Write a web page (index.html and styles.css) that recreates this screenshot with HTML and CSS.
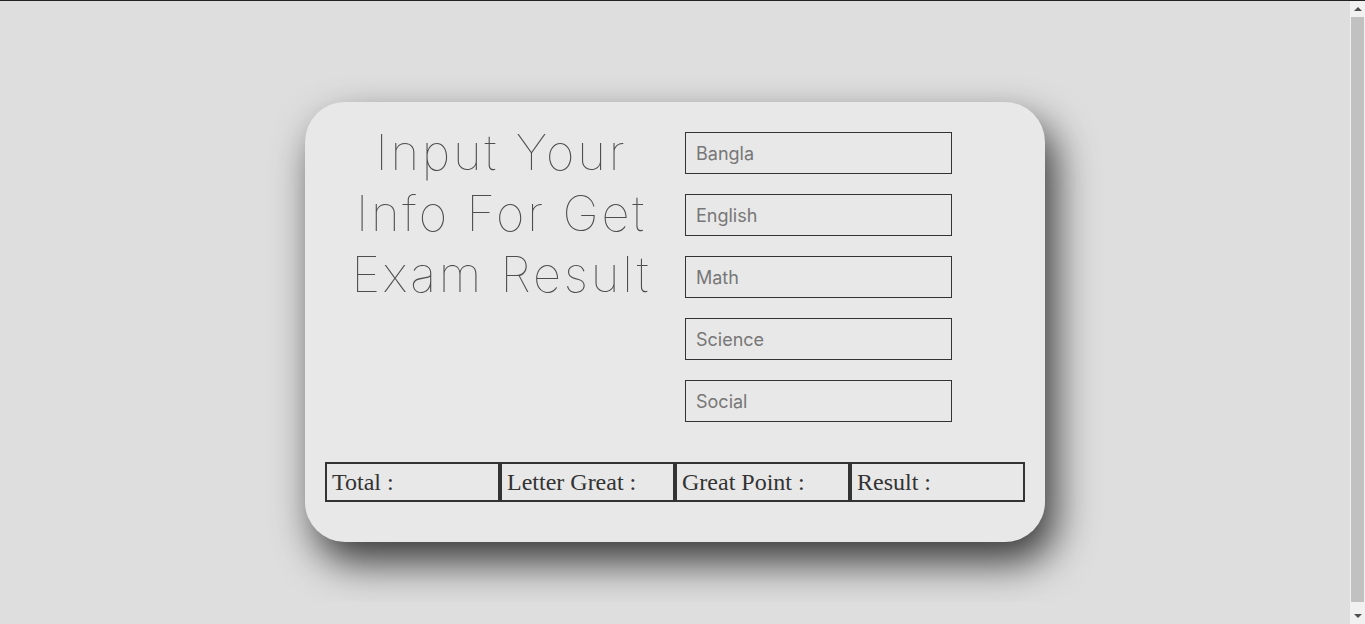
FILE: index.html
```html
<!DOCTYPE html>
<html lang="en">
<head>
<meta charset="utf-8">
<title>Exam Result</title>
<link rel="stylesheet" href="styles.css">
</head>
<body>
<main class="page">
  <section class="card">
    <div class="top">
      <h1 class="title"><span class="line">Input Your</span><span class="line">Info For Get</span><span class="line">Exam Result</span></h1>
      <form class="fields">
        <input class="field" type="text" placeholder="Bangla">
        <input class="field" type="text" placeholder="English">
        <input class="field" type="text" placeholder="Math">
        <input class="field" type="text" placeholder="Science">
        <input class="field" type="text" placeholder="Social">
      </form>
    </div>
    <table class="result">
      <tr>
        <td>Total :</td>
        <td>Letter Great :</td>
        <td>Great Point :</td>
        <td>Result :</td>
      </tr>
    </table>
  </section>
</main>
<div class="scrollbar" aria-hidden="true">
  <span class="arrow up"></span>
  <span class="thumb"></span>
  <span class="arrow down"></span>
</div>
</body>
</html>
```
FILE: styles.css
```css
html {
  border-top: 1px solid #222;
  background: #dedede;
}
body {
  margin: 0;
  background: #dedede;
  overflow: hidden;
}
.page {
  padding: 101px 15px 60px 0;
}
.card {
  box-sizing: border-box;
  width: 740px;
  height: 440px;
  margin: 0 auto;
  padding: 30px 20px 40px;
  background: #e8e8e8;
  border-radius: 40px;
  box-shadow: 10px 20px 40px rgba(0, 0, 0, 0.75);
  display: flex;
  flex-direction: column;
}
.top {
  display: flex;
  align-items: flex-start;
}
.title {
  width: 350px;
  margin: -10px 0 0;
  font-family: "Inter", "Lato", sans-serif;
  font-weight: 100;
  font-size: 49px;
  line-height: 61px;
  letter-spacing: 2.8px;
  color: #4e4e4e;
  text-align: center;
}
.line {
  display: block;
  white-space: nowrap;
  margin-right: -2.8px;
}
.fields {
  margin-left: 10px;
  display: flex;
  flex-direction: column;
  gap: 20px;
}
.field {
  box-sizing: border-box;
  width: 267px;
  height: 42px;
  margin: 0;
  padding: 0 10px;
  border: 1px solid #333;
  background: transparent;
  font-family: "Inter", sans-serif;
  font-size: 18px;
  color: #333;
  outline: none;
}
.field::placeholder {
  color: #777;
}
.result {
  margin-top: 40px;
  width: 700px;
  border-spacing: 0;
  table-layout: fixed;
}
.result td {
  height: 36px;
  padding: 0 5px;
  border: 2px solid #333;
  font-family: "Liberation Serif", serif;
  font-size: 24px;
  color: #333;
}
.scrollbar {
  position: fixed;
  top: 1px;
  right: 0;
  bottom: 0;
  width: 15px;
  background: #f1f1f1;
  display: flex;
  flex-direction: column;
  align-items: center;
}
.arrow {
  width: 0;
  height: 0;
  border-left: 4px solid transparent;
  border-right: 4px solid transparent;
}
.up {
  margin-top: 6px;
  border-bottom: 4px solid #505050;
}
.down {
  margin-bottom: 6px;
  border-top: 4px solid #505050;
}
.thumb {
  flex: 1;
  width: 13px;
  margin: 6px 0 12px;
  background: #c1c1c1;
}
```
